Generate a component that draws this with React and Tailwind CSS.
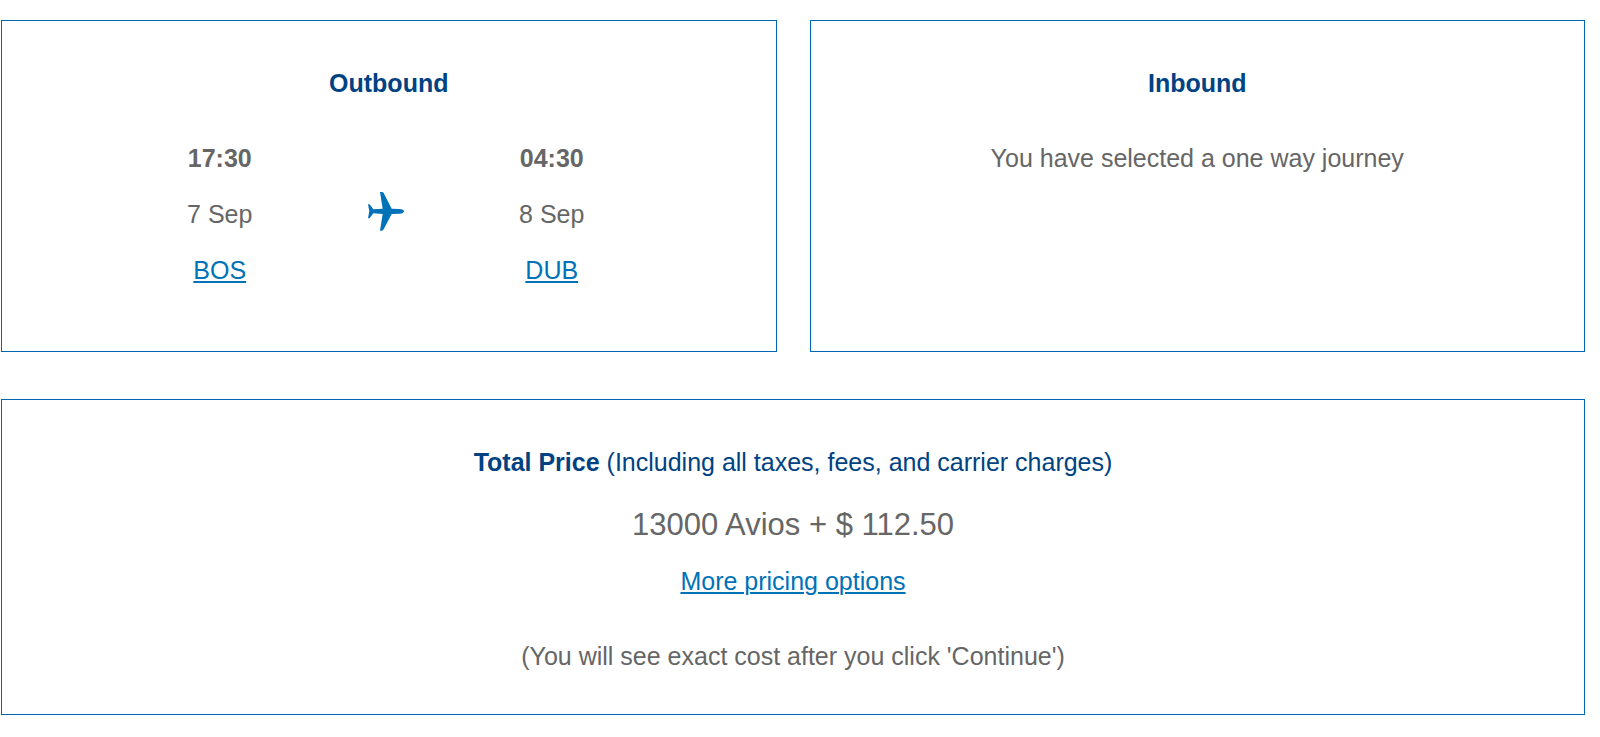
import React from "react";

const PlaneIcon = () => (
  <svg
    className="w-9 h-[39px] text-[#0072b8]"
    viewBox="0 0 108 117"
    fill="currentColor"
    aria-hidden="true"
  >
    <path d="M36 0h5c3 0 4 1 6 3l24 47 23 1c9 1 14 3 14 7s-5 7-14 7l-23 1-24 46c-2 2-3 4-6 4h-5l8-50-28-2-9 12c-1 2-2 3-4 3H0l4-21-4-21h3c2 0 3 1 4 3l9 12 28-2z" />
  </svg>
);

const Link = ({ children }) => (
  <a
    href="#"
    className="text-[#0072b8] underline decoration-2 underline-offset-2"
  >
    {children}
  </a>
);

const Stop = ({ time, date, airport }) => (
  <div className="flex flex-col items-center gap-5">
    <strong>{time}</strong>
    <span>{date}</span>
    <Link>{airport}</Link>
  </div>
);

const Card = ({ className, children }) => (
  <section
    className={`border border-[#0068b3] px-6 pt-11 text-center ${className}`}
  >
    {children}
  </section>
);

const App = () => {
  return (
    <main className="bg-white pt-5 pl-px pr-[15px] font-['Liberation_Sans',Arial,sans-serif] text-[25px] leading-9 text-[#666666]">
      <div className="grid grid-cols-2 gap-[33px]">
        <Card className="pb-[63px]">
          <h2 className="mb-[39px] font-bold text-[#004282]">Outbound</h2>
          <div className="mx-auto grid w-[504px] max-w-full grid-cols-3 items-center pr-1.5">
            <Stop time="17:30" date="7 Sep" airport="BOS" />
            <div className="flex justify-center pb-1.5">
              <PlaneIcon />
            </div>
            <Stop time="04:30" date="8 Sep" airport="DUB" />
          </div>
        </Card>

        <Card className="pb-[63px]">
          <h2 className="mb-[39px] font-bold text-[#004282]">Inbound</h2>
          <p>You have selected a one way journey</p>
        </Card>
      </div>

      <Card className="mt-[47px] pb-10">
        <h2 className="mb-[27px] text-[#004282]">
          <strong>Total Price</strong> (Including all taxes, fees, and carrier
          charges)
        </h2>
        <p className="mb-5 text-[31px] leading-9">13000 Avios + $ 112.50</p>
        <p className="mb-[39px]">
          <Link>More pricing options</Link>
        </p>
        <p>(You will see exact cost after you click 'Continue')</p>
      </Card>
    </main>
  );
};

export default App;
